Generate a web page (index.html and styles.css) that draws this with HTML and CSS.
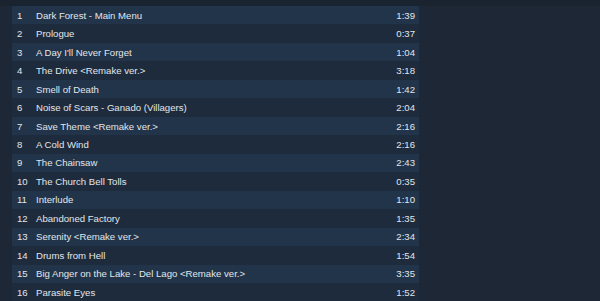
FILE: index.html
```html
<!DOCTYPE html>
<html>
<head>
<meta charset="utf-8">
<link rel="stylesheet" href="styles.css">
</head>
<body>
<div class="topbar"></div>
<div class="page">
  <div class="tracks">
    <div class="row"><span class="num">1</span><span class="title">Dark Forest - Main Menu</span><span class="dur">1:39</span></div>
    <div class="row"><span class="num">2</span><span class="title">Prologue</span><span class="dur">0:37</span></div>
    <div class="row"><span class="num">3</span><span class="title">A Day I'll Never Forget</span><span class="dur">1:04</span></div>
    <div class="row"><span class="num">4</span><span class="title">The Drive &lt;Remake ver.&gt;</span><span class="dur">3:18</span></div>
    <div class="row"><span class="num">5</span><span class="title">Smell of Death</span><span class="dur">1:42</span></div>
    <div class="row"><span class="num">6</span><span class="title">Noise of Scars - Ganado (Villagers)</span><span class="dur">2:04</span></div>
    <div class="row"><span class="num">7</span><span class="title">Save Theme &lt;Remake ver.&gt;</span><span class="dur">2:16</span></div>
    <div class="row"><span class="num">8</span><span class="title">A Cold Wind</span><span class="dur">2:16</span></div>
    <div class="row"><span class="num">9</span><span class="title">The Chainsaw</span><span class="dur">2:43</span></div>
    <div class="row"><span class="num">10</span><span class="title">The Church Bell Tolls</span><span class="dur">0:35</span></div>
    <div class="row"><span class="num">11</span><span class="title">Interlude</span><span class="dur">1:10</span></div>
    <div class="row"><span class="num">12</span><span class="title">Abandoned Factory</span><span class="dur">1:35</span></div>
    <div class="row"><span class="num">13</span><span class="title">Serenity &lt;Remake ver.&gt;</span><span class="dur">2:34</span></div>
    <div class="row"><span class="num">14</span><span class="title">Drums from Hell</span><span class="dur">1:54</span></div>
    <div class="row"><span class="num">15</span><span class="title">Big Anger on the Lake - Del Lago &lt;Remake ver.&gt;</span><span class="dur">3:35</span></div>
    <div class="row"><span class="num">16</span><span class="title">Parasite Eyes</span><span class="dur">1:52</span></div>
  </div>
</div>
</body>
</html>
```
FILE: styles.css
```css
html, body {
  margin: 0;
  padding: 0;
  background: #1d2736;
  height: 301px;
  overflow: hidden;
}
.topbar {
  height: 6px;
  background: #1a2330;
}
.page {
  padding-left: 12px;
}
.tracks {
  width: 407px;
  display: flex;
  flex-direction: column;
  font-family: "Liberation Sans", Arial, sans-serif;
  font-size: 9.6px;
  color: #e2e6ea;
}
.row {
  height: 18.47px;
  display: flex;
  align-items: center;
  background: #1e2b3c;
}
.row:nth-child(odd) {
  background: #213449;
}
.num {
  width: 24px;
  padding-left: 5px;
  box-sizing: border-box;
}
.title {
  flex: 1;
}
.dur {
  padding-right: 4px;
}
```
